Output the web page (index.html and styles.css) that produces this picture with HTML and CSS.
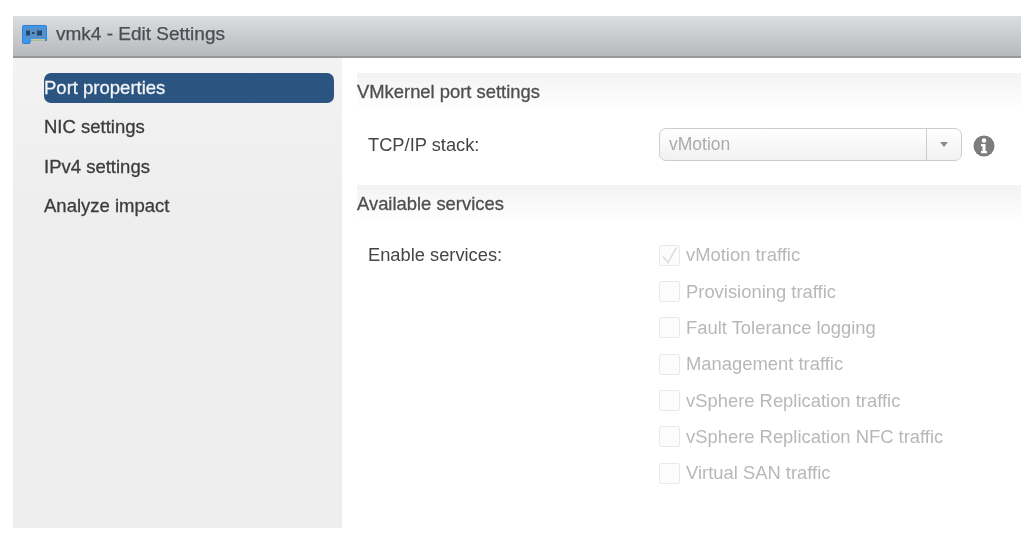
FILE: index.html
```html
<!DOCTYPE html>
<html lang="en">
<head>
<meta charset="utf-8">
<title>vmk4 - Edit Settings</title>
<link rel="stylesheet" href="styles.css">
</head>
<body>
<div class="dialog">
  <header class="titlebar">
    <svg class="nic-icon" width="25" height="19" viewBox="0 0 25 19"><path d="M1.500 .5h22a1 1 0 0 1 1 1v14H9l-1.500 3h-6a1 1 0 0 1-1-1V1.500a1 1 0 0 1 1-1z" fill="#3e97ea" stroke="#2f80d2"/><rect x="3" y="3" width="19" height="10" fill="#5a8fc4"/><rect x="4" y="5.500" width="4" height="5" fill="#23486e"/><rect x="10" y="7" width="2.500" height="2" fill="#23486e"/><rect x="15" y="5.500" width="5" height="5" fill="#23486e"/><rect x="9" y="14" width="14" height="1.800" fill="#c8cc8c"/></svg>
    <span class="title">vmk4 - Edit Settings</span>
  </header>
  <div class="body">
    <nav class="sidebar">
      <a class="nav-item active">Port properties</a>
      <a class="nav-item">NIC settings</a>
      <a class="nav-item">IPv4 settings</a>
      <a class="nav-item">Analyze impact</a>
    </nav>
    <main class="content">
      <h2 class="section-head">VMkernel port settings</h2>
      <div class="stack-row">
        <span class="field-label">TCP/IP stack:</span>
        <div class="select"><span class="select-value">vMotion</span><span class="select-btn"><i class="caret"></i></span></div>
        <svg class="info" width="22" height="22" viewBox="0 0 22 22"><circle cx="11" cy="11" r="10.500" fill="#7d7d7d"/><circle cx="11" cy="5.500" r="2.200" fill="#fff"/><path d="M8 9h4.500v7H14v2.200H8V16h1.500v-4.800H8z" fill="#fff"/></svg>
      </div>
      <h2 class="section-head">Available services</h2>
      <div class="services">
        <span class="field-label">Enable services:</span>
        <ul class="checks">
          <li><span class="box"><svg width="20" height="20" viewBox="0 0 20 20"><path d="M3 10.500l5 6 8.500-15" fill="none" stroke="#dadada" stroke-width="1.500"/></svg></span>vMotion traffic</li>
          <li><span class="box"></span>Provisioning traffic</li>
          <li><span class="box"></span>Fault Tolerance logging</li>
          <li><span class="box"></span>Management traffic</li>
          <li><span class="box"></span>vSphere Replication traffic</li>
          <li><span class="box"></span>vSphere Replication NFC traffic</li>
          <li><span class="box"></span>Virtual SAN traffic</li>
        </ul>
      </div>
    </main>
  </div>
</div>
</body>
</html>
```
FILE: styles.css
```css
* { box-sizing: border-box; }
html, body { margin: 0; height: 555px; overflow: hidden; background: #fff; }
body { font-family: "Liberation Sans", Arial, sans-serif; color: #3f3f3f; padding-top: 16px; }
.dialog { margin-left: 13px; width: 1008px; filter: blur(0.45px); }
.titlebar { height: 42px; display: flex; align-items: center; gap: 9px; padding: 0 0 4px 9px; background: linear-gradient(#dcdde0, #b8b9bc); border-bottom: 2px solid #97989b; }
.title { font-size: 19px; color: #4a4d52; -webkit-text-stroke: 0.25px #4a4d52; }
.body { display: flex; height: 470px; }
.sidebar { width: 329px; background: linear-gradient(#f3f3f3, #eeeeee 30%); padding: 15px 8px 0 31px; display: flex; flex-direction: column; gap: 9.300px; }
.nav-item { height: 30px; line-height: 30px; font-size: 18.500px; color: #3c3c3c; -webkit-text-stroke: 0.3px #3c3c3c; border-radius: 7px; }
.active { background: #2b5480; color: #f2f5f8; -webkit-text-stroke: 0.3px #f2f5f8; }
.content { flex: 1; padding: 15px 0 0 15px; }
.section-head { margin: 0; height: 37px; line-height: 37px; font-size: 18.400px; font-weight: 400; color: #4f4f4f; -webkit-text-stroke: 0.3px #4f4f4f; background: linear-gradient(#f3f3f3, #ffffff); }
.stack-row { height: 75px; display: flex; align-items: center; padding: 0 0 6px 11px; }
.field-label { font-size: 18.300px; color: #454545; }
.stack-row .field-label { width: 291px; }
.select { width: 303px; height: 33px; display: flex; border: 1px solid #cdcdcd; border-radius: 7px; background: linear-gradient(#fff, #f1f1f1); }
.select-value { flex: 1; padding-left: 9px; line-height: 30px; font-size: 17.500px; color: #aeaba7; }
.select-btn { width: 35px; border-left: 1px solid #cdcdcd; display: flex; align-items: center; justify-content: center; }
.caret { width: 0; height: 0; border-left: 4px solid transparent; border-right: 4px solid transparent; border-top: 5px solid #8a8a8a; }
.info { margin: 2px 0 0 11px; }
.services { display: flex; padding: 15px 0 0 11px; }
.services .field-label { width: 291px; line-height: 36px; }
.checks { list-style: none; margin: 0; padding: 0; }
.checks li { height: 36.350px; display: flex; align-items: center; gap: 6px; font-size: 18.400px; color: #b8b8b8; }
.box { width: 21px; height: 21px; border: 1px solid #e9e9e9; border-radius: 2px; background: #fcfcfc; display: block; }
.box svg { display: block; }
```
